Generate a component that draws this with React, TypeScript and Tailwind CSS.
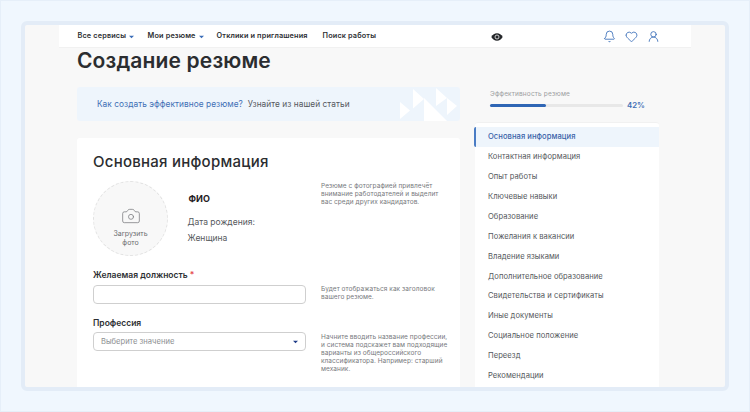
import React from 'react';
import { Bell, Heart, UserRound, Camera } from 'lucide-react';

const sections = [
  'Контактная информация',
  'Опыт работы',
  'Ключевые навыки',
  'Образование',
  'Пожелания к вакансии',
  'Владение языками',
  'Дополнительное образование',
  'Свидетельства и сертификаты',
  'Иные документы',
  'Социальное положение',
  'Переезд',
  'Рекомендации',
];

const Caret = ({ className }: { className: string }) => (
  <svg width="5" height="4" viewBox="0 0 6 4" className={className}>
    <path d="M0 0.5h6L3 3.5z" fill="currentColor" />
  </svg>
);

const Hint = ({ children, className }: { children: React.ReactNode; className?: string }) => (
  <p className={`text-[6.5px] leading-[8px] tracking-[0.05px] text-[#77797d] ${className ?? ''}`}>{children}</p>
);

const App = () => {
  return (
    <div className="h-[412px] w-[750px] overflow-hidden border border-[#e6eff9] bg-[#f0f7fe] p-[20px] font-['Inter',sans-serif]">
      <div className="h-[370px] overflow-hidden rounded-md border-4 border-[#e3ecf7] bg-[#f8f8f8]">
        {/* Top nav */}
        <div className="mx-[34px] flex h-[23px] items-center border-b border-[#f1f1f1] bg-white pl-[18.5px] pt-[1px] text-[7.3px] font-semibold tracking-[0.15px] text-[#2d2f33]">
          <span>Все сервисы</span>
          <Caret className="ml-[3px] text-[#3a6cb8]" />
          <span className="ml-[13.5px]">Мои резюме</span>
          <Caret className="ml-[3px] text-[#3a6cb8]" />
          <span className="ml-[13px]">Отклики и приглашения</span>
          <span className="ml-[15px]">Поиск работы</span>
          <svg width="12" height="8" viewBox="0 0 12 8" className="ml-[115px]">
            <path d="M0.3 4C1.6 1.6 3.6 0.3 6 0.3S10.4 1.6 11.7 4C10.4 6.4 8.4 7.7 6 7.7S1.6 6.4 0.3 4z" fill="#26282b" />
            <circle cx="6" cy="4" r="2" fill="none" stroke="#f2f2f2" strokeWidth="0.8" />
          </svg>
          <Bell size={13} strokeWidth={1.5} className="ml-[100px] text-[#2f66b5]" />
          <Heart size={13} strokeWidth={1.5} className="ml-[9px] text-[#2f66b5]" />
          <UserRound size={13} strokeWidth={1.5} className="ml-[9px] text-[#2f66b5]" />
        </div>

        <div className="ml-[52px] flex items-start">
          {/* Left column */}
          <div className="w-[383px] shrink-0">
            <h1 className="mt-[1px] text-[21px] font-semibold leading-[24px] tracking-[0.15px] text-[#2b2d30]">Создание резюме</h1>

            <div className="relative mt-[14px] flex h-[34px] items-center rounded-[3px] bg-[#eef5fc] pl-[20px] pt-[1px] text-[8.3px] tracking-[0.05px]">
              <span className="text-[#3f6fb5]">Как создать эффективное резюме?</span>
              <span className="ml-[5px] text-[#55585c]">Узнайте из нашей статьи</span>
              <svg width="62" height="34" viewBox="0 0 62 34" className="absolute right-0 top-0">
                <g fill="#fff">
                  <path d="M2 15l10 8.5L2 32z" />
                  <path d="M15 2l11 10-11 9.500z" />
                  <path d="M26 11l23 23H26z" />
                  <path d="M38 1l11 10-11 8z" />
                  <path d="M49 11l10 8-10 9z" />
                </g>
              </svg>
            </div>

            <div className="mt-[17px] h-[260px] rounded-t-[3px] bg-white pl-[16px] pt-[14px]">
              <h2 className="text-[15px] font-medium leading-[20px] tracking-[0.25px] text-[#2b2d30]">Основная информация</h2>

              <div className="mt-[9px] flex items-start">
                <div className="flex h-[75px] w-[75px] shrink-0 flex-col items-center rounded-full border border-dashed border-[#e2e2e2] bg-[#f8f8f8] pt-[24px]">
                  <Camera size={20} strokeWidth={0.9} className="text-[#77797d]" />
                  <span className="mt-[3px] text-center text-[7px] leading-[9px] text-[#6b6d70]">
                    Загрузить
                    <br />
                    фото
                  </span>
                </div>

                <div className="ml-[19.5px] w-[133.5px] shrink-0 pt-[12px]">
                  <p className="pl-[1px] text-[9px] font-bold leading-[12px] text-[#1f2023]">ФИО</p>
                  <p className="mt-[11px] text-[8.5px] leading-[12px] text-[#55585c]">Дата рождения:</p>
                  <p className="mt-[4px] text-[8.5px] leading-[12px] text-[#55585c]">Женщина</p>
                </div>

                <Hint className="pt-[1px]">
                  Резюме с фотографией привлечёт
                  <br />
                  внимание работодателей и выделит
                  <br />
                  вас среди других кандидатов.
                </Hint>
              </div>

              <div className="mt-[13px] flex items-start">
                <div className="w-[213px] shrink-0">
                  <p className="text-[8.5px] font-semibold leading-[12px] text-[#2d2f33]">
                    Желаемая должность <span className="text-[#e5484d]">*</span>
                  </p>
                  <div className="mt-[4px] h-[19px] rounded-[4px] border border-[#cfcfcf] bg-white" />
                </div>
                <Hint className="ml-[15px] mt-[16px]">
                  Будет отображаться как заголовок
                  <br />
                  вашего резюме.
                </Hint>
              </div>

              <div className="mt-[13px] flex items-start">
                <div className="w-[213px] shrink-0">
                  <p className="text-[8.5px] font-semibold leading-[12px] text-[#2d2f33]">Профессия</p>
                  <div className="mt-[3px] flex h-[19px] items-center justify-between rounded-[4px] border border-[#cfcfcf] bg-white pl-[7px] pr-[7px] pt-[1px]">
                    <span className="text-[7.6px] text-[#8d8f92]">Выберите значение</span>
                    <Caret className="text-[#1f3c88]" />
                  </div>
                </div>
                <Hint className="ml-[15px] mt-[16px]">
                  Начните вводить название профессии,
                  <br />
                  и система подскажет вам подходящие
                  <br />
                  варианты из общероссийского
                  <br />
                  классификатора. Например: старший
                  <br />
                  механик.
                </Hint>
              </div>
            </div>
          </div>

          {/* Right column */}
          <div className="ml-[14px] w-[185px] shrink-0">
            <div className="mt-[42px] pl-[16px]">
              <p className="text-[6.5px] leading-[8px] tracking-[0.15px] text-[#9b9da0]">Эффективность резюме</p>
              <div className="mt-[2px] flex items-center">
                <div className="h-[3px] w-[133px] rounded-full bg-[#e8e8e8]">
                  <div className="h-[3px] w-[56px] rounded-full bg-[#2f66b5]" />
                </div>
                <span className="ml-[4px] text-[7.8px] font-semibold leading-[10px] text-[#3f6fb5]">42%</span>
              </div>
            </div>

            <div className="ml-[1px] mt-[12px] h-[300px] rounded-t-[3px] border-t border-[#f1f1f1] bg-white pt-[4px] text-[7.6px] tracking-[0.05px] text-[#55585c]">
              <div className="-ml-[1px] flex h-[20px] items-center rounded-l-[2px] border-l-2 border-[#4a7cc4] bg-[#eef5fc] pl-[12px] font-medium text-[#3a62a8]">
                Основная информация
              </div>
              {sections.map((name) => (
                <div key={name} className="flex h-[19.9px] items-center pl-[13px]">
                  {name}
                </div>
              ))}
            </div>
          </div>
        </div>
      </div>
    </div>
  );
};

export default App;
